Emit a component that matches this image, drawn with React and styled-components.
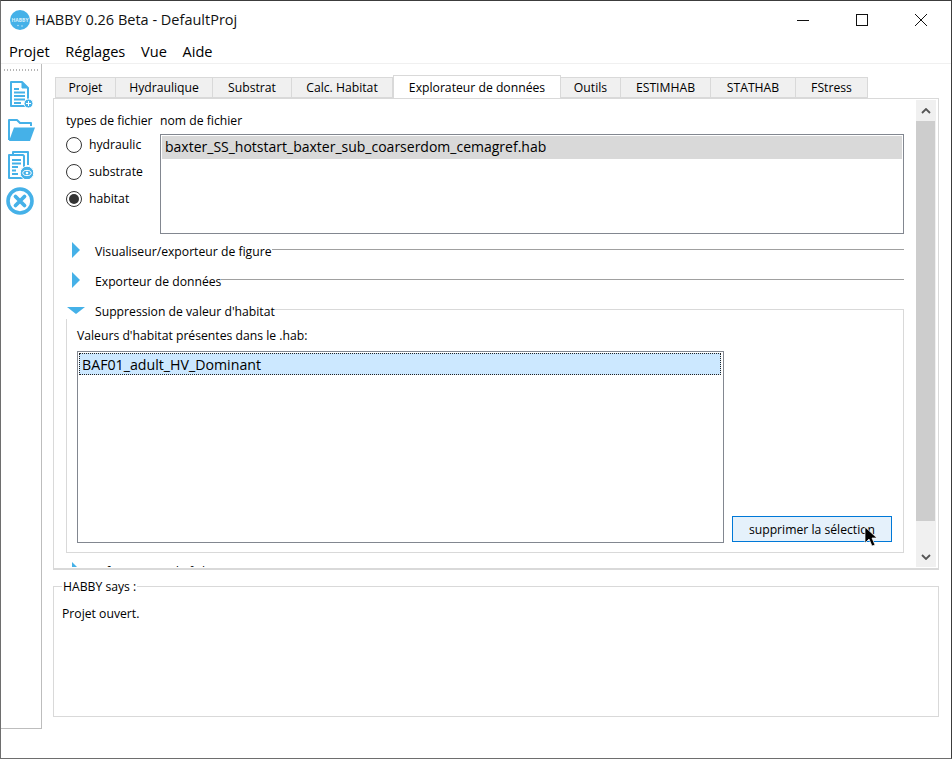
import React from 'react';
import styled, { createGlobalStyle } from 'styled-components';

const Global = createGlobalStyle`
  html, body { margin: 0; padding: 0; background: #fff; }
  * { box-sizing: border-box; }
  body { font-family: "Open Sans", "Noto Sans", sans-serif; color: #000; }
`;

const Win = styled.div`
  width: 952px;
  height: 759px;
  border: 1px solid #6e6e6e;
  border-top-color: #3c3c3c;
  border-right-color: #3c3c3c;
  background: #fff;
  display: flex;
  flex-direction: column;
  position: relative;
  overflow: hidden;
`;

const TitleBar = styled.div`
  height: 39px;
  display: flex;
  align-items: center;
  padding: 0 1px 2px 9px;
  font-size: 14.5px;
  flex: none;
`;

const TitleText = styled.span`
  margin-left: 5px;
  flex: 1;
  color: #111;
`;

const WinBtn = styled.div`
  width: 59px;
  height: 37px;
  display: flex;
  align-items: center;
  justify-content: center;
`;

const MenuBar = styled.div`
  height: 24px;
  flex: none;
  display: flex;
  gap: 15.7px;
  padding: 0 0 2px 8px;
  align-items: center;
  font-size: 14.6px;
  border-bottom: 1px solid #f0f0f0;
`;

const Body = styled.div`
  flex: 1;
  display: flex;
  min-height: 0;
`;

const ToolBar = styled.div`
  width: 41px;
  height: 665px;
  flex: none;
  border-right: 1px solid #bdbdbd;
  border-bottom: 1px solid #bdbdbd;
  padding-top: 5px;
  display: flex;
  flex-direction: column;
  align-items: center;
`;

const Grip = styled.div`
  width: 34px;
  height: 2px;
  margin-bottom: 10px;
  background: repeating-linear-gradient(90deg, #b5b5b5 0 1px, transparent 1px 3px);
`;

const ToolIcon = styled.svg`
  display: block;
  flex: none;
  margin-bottom: ${p => p.$gap || 0}px;
  margin-left: ${p => p.$shift || 0}px;
`;

const Main = styled.div`
  flex: 1;
  padding: 12px 12px 0 11px;
  min-width: 0;
  display: flex;
  flex-direction: column;
`;

const TabRow = styled.div`
  display: flex;
  height: 22px;
  margin-left: 2px;
  flex: none;
  position: relative;
  z-index: 1;
`;

const Tab = styled.div`
  height: ${p => (p.$active ? 23 : 21)}px;
  margin-top: ${p => (p.$active ? -1 : 1)}px;
  width: ${p => p.$w}px;
  background: ${p => (p.$active ? '#fff' : '#f0f0f0')};
  border: 1px solid #d9d9d9;
  border-left-width: ${p => (p.$first || p.$active ? 1 : 0)}px;
  border-bottom-width: ${p => (p.$active ? 0 : 1)}px;
  font-size: 12.2px;
  display: flex;
  align-items: center;
  justify-content: center;
`;

const Pane = styled.div`
  height: 472px;
  border: 1px solid #d9d9d9;
  border-bottom-width: 2px;
  display: flex;
  flex: none;
  overflow: hidden;
`;

/* the viewport of the scroll area stops 1px above the pane border, so the
   last collapsed section only shows the top of its arrow and letters */
const Scroller = styled.div`
  flex: 1;
  min-width: 0;
  margin-bottom: 1px;
  padding: 13px 12px 0 12px;
  overflow: hidden;
  font-size: 12.2px;
`;

const FileRow = styled.div`
  display: flex;
  height: 124px;
  flex: none;
`;

const TypesCol = styled.div`
  width: 94px;
  flex: none;
  display: flex;
  flex-direction: column;
`;

const ListCol = styled.div`
  flex: 1;
  display: flex;
  flex-direction: column;
`;

const Caption = styled.div`
  height: ${p => p.$h}px;
  line-height: 17px;
  white-space: nowrap;
`;

const Radio = styled.div`
  display: flex;
  align-items: center;
  height: 27px;
  gap: 7px;
`;

const RadioDot = styled.span`
  width: 16px;
  height: 16px;
  border-radius: 50%;
  border: 1px solid #333;
  background: #fff;
  display: flex;
  align-items: center;
  justify-content: center;
  &::after {
    content: '';
    width: 10px;
    height: 10px;
    border-radius: 50%;
    background: ${p => (p.$on ? '#333' : 'transparent')};
  }
`;

const ListBox = styled.div`
  border: 1px solid #828790;
  height: ${p => p.$h}px;
  width: ${p => p.$w || 'auto'};
  padding: 1px 1px 0 1px;
  flex: none;
`;

const FileItem = styled.div`
  height: 23px;
  background: #d9d9d9;
  padding-left: 3px;
  font-size: 14px;
  line-height: 22px;
  white-space: nowrap;
`;

const Section = styled.div`
  display: flex;
  align-items: center;
  height: 30px;
  margin-left: 1px;
  flex: none;
`;

const Arrow = styled.svg`
  width: 18px;
  height: 18px;
  margin-right: 10px;
  flex: none;
`;

const SectionTitle = styled.span`
  white-space: nowrap;
`;

const SectionLine = styled.div`
  flex: 1;
  height: 1px;
  margin-top: -4px;
  background: #a0a0a0;
`;

/* top edge of the open group: runs on into the right side of the frame */
const GroupEdge = styled.div`
  flex: 1;
  align-self: flex-end;
  height: 17px;
  border-top: 1px solid #d9d9d9;
  border-right: 1px solid #d9d9d9;
`;

const Group = styled.div`
  border: 1px solid #d9d9d9;
  border-top: 0;
  height: 234px;
  padding: 8px 10px 0 10px;
  margin-top: -7px;
`;

const GroupCaption = styled.div`
  height: 24px;
  line-height: 17px;
`;

const HabRow = styled.div`
  display: flex;
  align-items: flex-end;
  gap: 8px;
`;

const HabItem = styled.div`
  height: 22px;
  margin-right: 1px;
  background: #cce8ff;
  border: 1px dotted #222;
  font-size: 14.2px;
  line-height: 21px;
  padding-left: 2px;
`;

const Button = styled.div`
  width: 160px;
  height: 26px;
  background: #e5f1fb;
  border: 1px solid #0078d7;
  font-size: 12.2px;
  display: flex;
  align-items: center;
  justify-content: center;
  margin-bottom: 1px;
`;

const ClipSection = styled(Section)`
  margin-top: 3px;
`;

const ScrollBar = styled.div`
  width: 20px;
  flex: none;
  margin: 1px 2px 1px 0;
  background: #f0f0f0;
  display: flex;
  flex-direction: column;
`;

const ScrollBtn = styled.div`
  height: 21px;
  flex: none;
  display: flex;
  align-items: center;
  justify-content: center;
`;

const Thumb = styled.div`
  flex: 1;
  margin: 0 1px 25px 0;
  background: #cdcdcd;
`;

const Says = styled.fieldset`
  margin: 8px 0 0 0;
  padding: 10px 8px 0 8px;
  height: 139px;
  flex: none;
  border: 1px solid #d9d9d9;
  font-size: 12.2px;
  min-width: 0;
  legend {
    padding: 0 1px;
    line-height: 17px;
  }
`;

const Cursor = styled.svg`
  position: absolute;
  left: 863px;
  top: 525px;
`;

const BLUE = '#45b1e8';

const tabs = [
  ['Projet', 61], ['Hydraulique', 97], ['Substrat', 79], ['Calc. Habitat', 101],
  ['Explorateur de données', 168], ['Outils', 60], ['ESTIMHAB', 90], ['STATHAB', 85], ['FStress', 72],
];

const Right = () => (
  <Arrow viewBox="0 0 18 18"><path d="M5 0 L13 8 L5 16 Z" fill={BLUE} /></Arrow>
);

const Down = () => (
  <Arrow viewBox="0 0 18 18"><path d="M0 5 H18 L9 12 Z" fill={BLUE} /></Arrow>
);

const App = () => (
  <>
    <Global />
    <Win>
      <TitleBar>
        <svg width="20" height="20" viewBox="0 0 20 20">
          <circle cx="10" cy="10" r="10" fill={BLUE} />
          <text x="10" y="11.5" textAnchor="middle" fontSize="5" fontWeight="700" fill="#d6effb">HABBY</text>
          <circle cx="8" cy="15.5" r="0.7" fill="#d6effb" />
          <circle cx="12" cy="16" r="0.7" fill="#d6effb" />
        </svg>
        <TitleText>HABBY 0.26 Beta - DefaultProj</TitleText>
        <WinBtn>
          <svg width="12" height="12"><path d="M0 6.5 H12" stroke="#111" /></svg>
        </WinBtn>
        <WinBtn>
          <svg width="12" height="12"><rect x="0.5" y="0.5" width="11" height="11" fill="none" stroke="#111" /></svg>
        </WinBtn>
        <WinBtn>
          <svg width="12" height="12"><path d="M0 0 L12 12 M12 0 L0 12" stroke="#111" /></svg>
        </WinBtn>
      </TitleBar>
      <MenuBar>
        <span>Projet</span><span>Réglages</span><span>Vue</span><span>Aide</span>
      </MenuBar>
      <Body>
        <ToolBar>
          <Grip />
          <ToolIcon width="24" height="28" viewBox="0 0 24 28" $gap={9}>
            <path d="M2 1 H13 L19 7 V25 H2 Z" fill="#fff" stroke={BLUE} strokeWidth="2" strokeLinejoin="round" />
            <path d="M13 1 V7 H19 Z" fill={BLUE} stroke={BLUE} />
            <path d="M5 8 H10 M5 11.5 H16 M5 15 H16 M5 18.5 H16 M5 22 H12" stroke={BLUE} strokeWidth="2" />
            <circle cx="19.5" cy="22.5" r="4.5" fill={BLUE} stroke="#fff" />
            <path d="M17 22.5 H22 M19.5 20 V25" stroke="#fff" />
          </ToolIcon>
          <ToolIcon width="28" height="24" viewBox="0 0 28 24" $gap={9}>
            <path d="M2 22 V2 H10 L13 5 H24 V8" fill="none" stroke={BLUE} strokeWidth="2" strokeLinejoin="round" />
            <path d="M7 9.5 H28 L23 23 H2 Z" fill={BLUE} />
          </ToolIcon>
          <ToolIcon width="26" height="28" viewBox="0 0 26 28" $gap={8}>
            <path d="M5 3 V1 H20 V14" fill="none" stroke={BLUE} strokeWidth="2" strokeLinejoin="round" />
            <path d="M1 4 H15 L16 5 V27 H1 Z" fill="#fff" stroke={BLUE} strokeWidth="2" strokeLinejoin="round" />
            <path d="M4 9 H13 M4 12.5 H13 M4 16 H10 M4 19.5 H8 M4 23 H10" stroke={BLUE} strokeWidth="2" />
            <circle cx="19" cy="22" r="6.8" fill={BLUE} stroke="#fff" />
            <ellipse cx="19" cy="22" rx="4.2" ry="2.6" fill="none" stroke="#fff" />
            <circle cx="19" cy="22" r="1.3" fill="#fff" />
          </ToolIcon>
          <ToolIcon width="28" height="28" viewBox="0 0 28 28" $shift={-2}>
            <circle cx="14" cy="14" r="12" fill="#fff" stroke={BLUE} strokeWidth="3.6" />
            <path d="M9.5 9.5 L18.5 18.5 M18.5 9.5 L9.5 18.5" stroke={BLUE} strokeWidth="3.8" strokeLinecap="round" />
          </ToolIcon>
        </ToolBar>
        <Main>
          <TabRow>
            {tabs.map(([t, w], i) => (
              <Tab key={t} $w={w} $first={i === 0} $active={i === 4}>{t}</Tab>
            ))}
          </TabRow>
          <Pane>
            <Scroller>
              <FileRow>
                <TypesCol>
                  <Caption $h={19}>types de fichier</Caption>
                  <Radio><RadioDot />hydraulic</Radio>
                  <Radio><RadioDot />substrate</Radio>
                  <Radio><RadioDot $on />habitat</Radio>
                </TypesCol>
                <ListCol>
                  <Caption $h={22}>nom de fichier</Caption>
                  <ListBox $h={100}>
                    <FileItem>baxter_SS_hotstart_baxter_sub_coarserdom_cemagref.hab</FileItem>
                  </ListBox>
                </ListCol>
              </FileRow>
              <Section><Right /><SectionTitle>Visualiseur/exporteur de figure</SectionTitle><SectionLine /></Section>
              <Section><Right /><SectionTitle>Exporteur de données</SectionTitle><SectionLine /></Section>
              <Section><Down /><SectionTitle>Suppression de valeur d'habitat</SectionTitle><GroupEdge /></Section>
              <Group>
                <GroupCaption>Valeurs d'habitat présentes dans le .hab:</GroupCaption>
                <HabRow>
                  <ListBox $h={192} $w="647px">
                    <HabItem>BAF01_adult_HV_Dominant</HabItem>
                  </ListBox>
                  <Button>supprimer la sélection</Button>
                </HabRow>
              </Group>
              <ClipSection><Right /><SectionTitle>Informations de fichier</SectionTitle><SectionLine /></ClipSection>
            </Scroller>
            <ScrollBar>
              <ScrollBtn>
                <svg width="10" height="6"><path d="M1 5 L5 1 L9 5" fill="none" stroke="#555" strokeWidth="1.8" /></svg>
              </ScrollBtn>
              <Thumb />
              <ScrollBtn>
                <svg width="10" height="6"><path d="M1 1 L5 5 L9 1" fill="none" stroke="#555" strokeWidth="1.8" /></svg>
              </ScrollBtn>
            </ScrollBar>
          </Pane>
          <Says>
            <legend>HABBY says :</legend>
            Projet ouvert.
          </Says>
        </Main>
      </Body>
      <Cursor width="14" height="22" viewBox="0 0 14 22">
        <path d="M1 1 V17 L5 13 L8 20 L11 19 L8 12 L13 12 Z" fill="#000" stroke="#fff" strokeWidth="0.7" />
      </Cursor>
    </Win>
  </>
);

export default App;
